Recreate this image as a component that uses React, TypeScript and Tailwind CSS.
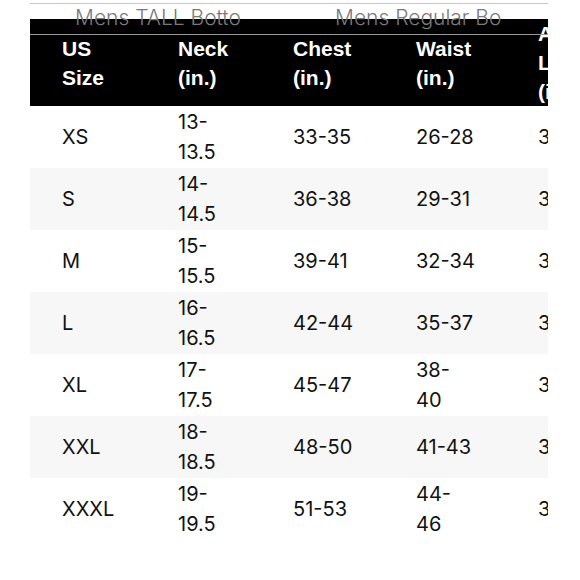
import React from 'react';

type Row = {
  size: string;
  neck: string[];
  chest: string[];
  waist: string[];
  arm: string[];
};

const rows: Row[] = [
  { size: 'XS', neck: ['13-', '13.5'], chest: ['33-35'], waist: ['26-28'], arm: ['32'] },
  { size: 'S', neck: ['14-', '14.5'], chest: ['36-38'], waist: ['29-31'], arm: ['33'] },
  { size: 'M', neck: ['15-', '15.5'], chest: ['39-41'], waist: ['32-34'], arm: ['34'] },
  { size: 'L', neck: ['16-', '16.5'], chest: ['42-44'], waist: ['35-37'], arm: ['35'] },
  { size: 'XL', neck: ['17-', '17.5'], chest: ['45-47'], waist: ['38-', '40'], arm: ['36'] },
  { size: 'XXL', neck: ['18-', '18.5'], chest: ['48-50'], waist: ['41-43'], arm: ['37'] },
  { size: 'XXXL', neck: ['19-', '19.5'], chest: ['51-53'], waist: ['44-', '46'], arm: ['38'] },
];

const headers: string[][] = [
  ['US', 'Size'],
  ['Neck', '(in.)'],
  ['Chest', '(in.)'],
  ['Waist', '(in.)'],
  ['Arm', 'Length', '(in.)'],
];

const cols = 'grid grid-cols-[116px_115px_123px_122px_1fr] pl-[32px]';

const Cell: React.FC<{ lines: string[] }> = ({ lines }) => (
  <div className="flex flex-col justify-center whitespace-nowrap">
    {lines.map((l, i) => (
      <span key={i}>{l}</span>
    ))}
  </div>
);

export default function App() {
  return (
    <div className="relative w-[580px] h-[580px] overflow-hidden bg-white font-['Inter','Liberation_Sans',Arial,sans-serif] text-[20px] text-[#111]">
      <div className="ml-[30px] mr-[32px] pt-[3px]">
        <div className="h-px bg-[#c8c8c8]" />
        <div className="h-[15px]" />

        <div className="overflow-hidden">
          {/* header */}
          <div className={`${cols} h-[87px] bg-black font-['Liberation_Sans',Arial,sans-serif] text-[21px] font-bold text-white leading-[29px]`}>
            {headers.map((h, i) => (
              <Cell key={i} lines={h} />
            ))}
          </div>

          {/* body */}
          {rows.map((r, i) => (
            <div
              key={r.size}
              className={`${cols} h-[62px] leading-[30px] ${i % 2 === 1 ? 'bg-[#f7f7f7]' : 'bg-white'}`}
            >
              <Cell lines={[r.size]} />
              <Cell lines={r.neck} />
              <Cell lines={r.chest} />
              <Cell lines={r.waist} />
              <Cell lines={r.arm} />
            </div>
          ))}
        </div>
      </div>

      {/* ghost header from the table behind */}
      <div className="pointer-events-none absolute left-[30px] top-[34px] h-px w-[518px] bg-[#9a9a9a]" />
      <span className="pointer-events-none absolute left-[75px] top-[7px] text-[21px] leading-[22px] font-light text-[#7a7a7a] whitespace-nowrap">
        Mens TALL Botto
      </span>
      <span className="pointer-events-none absolute left-[335px] top-[7px] text-[21px] leading-[22px] font-light text-[#7a7a7a] whitespace-nowrap">
        Mens Regular Bo
      </span>
    </div>
  );
}
